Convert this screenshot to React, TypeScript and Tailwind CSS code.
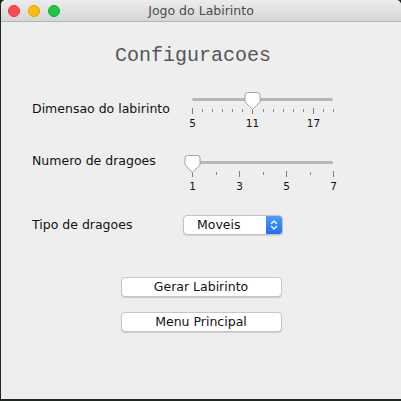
import React from 'react';

const sans = { fontFamily: '"DejaVu Sans", "Noto Sans", sans-serif' };

type SliderProps = { min: number; max: number; value: number; major: number };

const Slider: React.FC<SliderProps> = ({ min, max, value, major }) => {
  const pos = (v: number) => 8 + ((v - min) / (max - min)) * 141;
  const ticks: number[] = [];
  for (let v = min; v <= max; v++) ticks.push(v);

  return (
    <div className="relative h-[40px] w-[152px]">
      {/* track */}
      <div className="absolute left-[8px] top-[7.5px] h-[3px] w-[141px] rounded-full bg-[#b6b6b6]" />

      {/* ticks */}
      {ticks.map((v) => {
        const isMajor = (v - min) % major === 0;
        return (
          <div
            key={v}
            className={isMajor ? 'absolute top-[18px] h-[6px] w-px bg-[#7c7c7c]' : 'absolute top-[19px] h-[3px] w-px bg-[#8a8a8a]'}
            style={{ left: Math.round(pos(v)) }}
          />
        );
      })}

      {/* thumb */}
      <svg
        className="absolute top-[2px]"
        style={{ left: Math.round(pos(value)) - 8 }}
        width="17"
        height="19"
        viewBox="0 0 17 19"
      >
        <path
          d="M3.5 0.5 H13.5 Q16 0.5 16 3 V10 L8.5 17.5 L1 10 V3 Q1 0.5 3.5 0.5 Z"
          fill="#ffffff"
          stroke="#a3a3a3"
          strokeWidth="1"
        />
      </svg>

      {/* labels */}
      {ticks
        .filter((v) => (v - min) % major === 0)
        .map((v) => (
          <span
            key={v}
            className="absolute top-[27px] -translate-x-1/2 text-[10.5px] leading-[12px] text-[#111]"
            style={{ left: Math.round(pos(v)) + 0.5, ...sans }}
          >
            {v}
          </span>
        ))}
    </div>
  );
};

export default function App() {
  return (
    <div className="flex h-[401px] w-[401px] bg-[#1c2a22] pb-[2px] pl-[1px]">
      <div className="flex flex-1 flex-col overflow-hidden rounded-t-[5px] bg-[#eeeeee]" style={sans}>
        {/* title bar */}
        <div className="relative flex h-[22px] items-center border-b border-[#b3b3b3] bg-gradient-to-b from-[#ececec] to-[#d6d6d6] pl-[7px]">
          <div className="flex gap-[8px]">
            <span className="h-[12px] w-[12px] rounded-full border border-[#e2363d] bg-[#fd4a50]" />
            <span className="h-[12px] w-[12px] rounded-full border border-[#e0a300] bg-[#fdbc0a]" />
            <span className="h-[12px] w-[12px] rounded-full border border-[#10ad34] bg-[#1ac93e]" />
          </div>
          <span className="absolute inset-x-0 text-center text-[12.5px] leading-[21px] text-[#4b4b4b]">
            Jogo do Labirinto
          </span>
        </div>

        {/* content */}
        <div className="flex flex-1 flex-col">
          <h1
            className="ml-[114px] mt-[22px] text-[20px] leading-[24px] text-[#555555]"
            style={{ fontFamily: '"Liberation Mono", "Courier New", monospace' }}
          >
            Configuracoes
          </h1>

          <div className="mt-[22px] flex items-start pl-[31px]">
            <span className="mt-[11px] w-[152px] text-[12.5px] leading-[16px] text-[#111]">Dimensao do labirinto</span>
            <Slider min={5} max={19} value={11} major={6} />
          </div>

          <div className="mt-[23px] flex items-start pl-[31px]">
            <span className="w-[152px] text-[12.5px] leading-[16px] text-[#111]">Numero de dragoes</span>
            <Slider min={1} max={7} value={1} major={2} />
          </div>

          <div className="mt-[22px] flex items-center pl-[31px]">
            <span className="w-[151px] text-[12.5px] leading-[16px] text-[#111]">Tipo de dragoes</span>
            <div className="flex h-[20px] w-[100px] overflow-hidden rounded-[4px] border border-[#c4c4c4] bg-white shadow-[0_1px_1px_rgba(0,0,0,0.12)]">
              <span className="flex-1 pl-[13px] text-[12.5px] leading-[18px] text-[#111]">Moveis</span>
              <div className="flex w-[16px] items-center justify-center bg-gradient-to-b from-[#4a9cfc] to-[#1e6ff3]">
                <svg width="8" height="12" viewBox="0 0 8 12" fill="none" stroke="#ffffff" strokeWidth="1.3" strokeLinecap="round" strokeLinejoin="round">
                  <path d="M1.5 4.5 L4 2 L6.5 4.5" />
                  <path d="M1.5 7.5 L4 10 L6.5 7.5" />
                </svg>
              </div>
            </div>
          </div>

          <div className="mt-[42px] flex flex-col items-center gap-[15px]">
            <button className="h-[20px] w-[161px] rounded-[4px] border border-[#c6c6c6] bg-white text-[12.5px] leading-[18px] text-[#111] shadow-[0_1px_1px_rgba(0,0,0,0.15)]">
              Gerar Labirinto
            </button>
            <button className="h-[20px] w-[161px] rounded-[4px] border border-[#c6c6c6] bg-white text-[12.5px] leading-[18px] text-[#111] shadow-[0_1px_1px_rgba(0,0,0,0.15)]">
              Menu Principal
            </button>
          </div>
        </div>
      </div>
    </div>
  );
}
